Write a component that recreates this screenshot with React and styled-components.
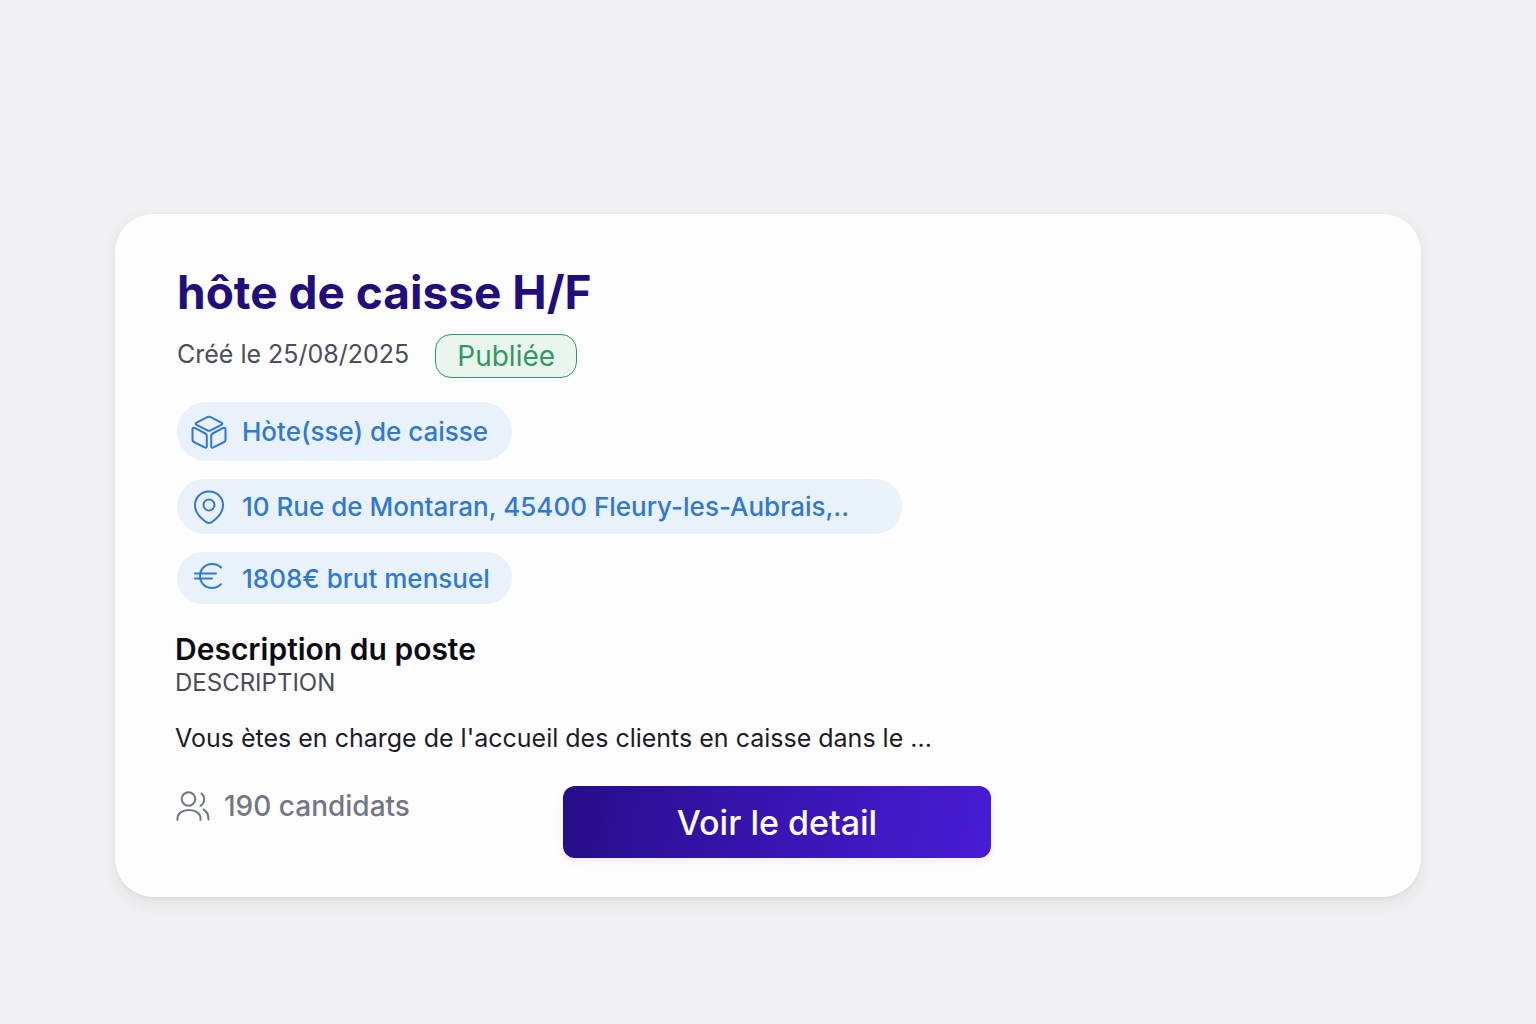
import styled, { createGlobalStyle } from "styled-components";

const App = () => {
  return (
    <>
      <GlobalStyle />
      <Page>
        <Card>
          <Title>hôte de caisse H/F</Title>
          <Meta>
            <CreatedAt>Créé le 25/08/2025</CreatedAt>
            <Status>Publiée</Status>
          </Meta>
          <Tags>
            <Tag $height={59}>
              <BoxIcon />
              Hòte(sse) de caisse
            </Tag>
            <Tag $height={55} $wide>
              <PinIcon />
              <TagText>10 Rue de Montaran, 45400 Fleury-les-Aubrais,..</TagText>
            </Tag>
            <Tag $height={52}>
              <EuroIcon />
              1808€ brut mensuel
            </Tag>
          </Tags>
          <SectionTitle>Description du poste</SectionTitle>
          <Label>DESCRIPTION</Label>
          <Description>
            Vous ètes en charge de l'accueil des clients en caisse dans le ...
          </Description>
          <Footer>
            <Candidates>
              <UsersIcon />
              190 candidats
            </Candidates>
            <DetailButton type="button">Voir le detail</DetailButton>
          </Footer>
        </Card>
      </Page>
    </>
  );
};

export default App;

const BoxIcon = () => (
  <Icon viewBox="0 0 36 36" aria-hidden="true">
    <path d="M16.4 3.2 5.6 8.600c-1.200.6-1.200 1.600 0 2.200l10.800 5.600c1.100.6 2.100.6 3.200 0l10.800-5.600c1.200-.6 1.200-1.600 0-2.200L19.600 3.200c-1.100-.5-2.100-.5-3.200 0Z" />
    <path d="M3.700 13.900c-1.300-.6-2.200-.1-2.200 1.200v10.600c0 1.100.4 1.800 1.400 2.300l10.700 5.400c1.300.6 2.200.1 2.200-1.200V21.800c0-1.100-.4-1.800-1.400-2.300Z" />
    <path d="M32.300 13.900c1.300-.6 2.200-.1 2.200 1.200v10.600c0 1.100-.4 1.800-1.400 2.300l-10.700 5.400c-1.300.6-2.200.1-2.200-1.200V21.800c0-1.100.4-1.800 1.400-2.300Z" />
  </Icon>
);

const PinIcon = () => (
  <Icon viewBox="0 0 36 36" aria-hidden="true">
    <path d="M18 2.500c-8.200 0-14 6-14 13.500 0 6.800 5.400 13.100 11.300 17.200 1.900 1.200 3.500 1.200 5.400 0C26.600 29.100 32 22.800 32 16c0-7.500-5.800-13.500-14-13.500Z" />
    <circle cx="18" cy="16" r="5.500" />
  </Icon>
);

const EuroIcon = () => (
  <Icon viewBox="0 0 36 36" aria-hidden="true">
    <path d="M30 7.500C27.800 5 24.700 4 21 4 14 4 9 9.300 9 16s5 12 12 12c3.700 0 6.800-1.300 9-3.800" />
    <path d="M4 13.500h21M4 18.500h17" />
  </Icon>
);

const UsersIcon = () => (
  <Icon viewBox="0 0 36 36" aria-hidden="true">
    <circle cx="13.500" cy="11" r="6.800" />
    <path d="M2.500 32v-1.500c0-5 4.500-8.500 11.500-8.500s11.500 3.500 11.500 8.500V32" />
    <path d="M26.500 5.500c3.800 3.300 3.800 9.300-1 12.300M28.500 21.500c3.200 1.600 5 5.300 5 10" />
  </Icon>
);

const GlobalStyle = createGlobalStyle`
  * {
    box-sizing: border-box;
  }

  body {
    margin: 0;
    background-color: #f1f1f3;
    font-family: Inter, "Open Sans", sans-serif;
  }
`;

const Page = styled.main`
  min-height: 100vh;
  padding: 214px 115px 120px;
`;

const Card = styled.article`
  padding: 52px 60px 39px;
  border-radius: 38px;
  background-color: #fefdfe;
  box-shadow: 0 6px 16px rgba(30, 35, 70, 0.08), 0 1px 3px rgba(30, 35, 70, 0.06);
`;

const Title = styled.h1`
  margin: 0;
  padding-left: 2px;
  color: #210e7a;
  font-size: 46px;
  font-weight: 700;
  line-height: 52px;
`;

const Meta = styled.div`
  display: flex;
  flex-wrap: wrap;
  gap: 26px;
  margin-top: 16px;
  padding-left: 2px;
`;

const CreatedAt = styled.span`
  color: #4b4d5a;
  font-size: 25px;
  font-weight: 400;
  line-height: 40px;
`;

const Status = styled.span`
  padding: 0 21px;
  border: 1px solid #2f9c60;
  border-radius: 16px;
  background-color: #eaf5ee;
  color: #2f9a60;
  font-size: 28px;
  font-weight: 400;
  line-height: 42px;
`;

const Tags = styled.div`
  display: flex;
  flex-direction: column;
  align-items: flex-start;
  gap: 18px;
  margin-top: 24px;
  padding-left: 2px;
`;

const Tag = styled.div`
  display: flex;
  align-items: center;
  gap: 15px;
  width: ${({ $wide }) => ($wide ? "725px" : "auto")};
  min-width: 335px;
  max-width: 100%;
  height: ${({ $height }) => $height}px;
  padding: 0 14px;
  border-radius: 30px;
  background-color: #e9f1fb;
  color: #3079d0;
  font-size: 26px;
  font-weight: 500;
  white-space: nowrap;
`;

const TagText = styled.span`
  overflow: hidden;
  text-overflow: ellipsis;
`;

const Icon = styled.svg`
  flex: none;
  width: 36px;
  height: 36px;
  fill: none;
  stroke: currentColor;
  stroke-width: 2;
  stroke-linecap: round;
  stroke-linejoin: round;
`;

const SectionTitle = styled.h2`
  margin: 28px 0 0;
  color: #0c0d14;
  font-size: 30px;
  font-weight: 600;
  line-height: 34px;
`;

const Label = styled.p`
  margin: 0;
  color: #4a4b54;
  font-size: 24px;
  font-weight: 400;
  line-height: 34px;
`;

const Description = styled.p`
  margin: 20px 0 0;
  color: #1b1c26;
  font-size: 25px;
  font-weight: 400;
  line-height: 36px;
`;

const Footer = styled.footer`
  display: grid;
  grid-template-columns: 388px minmax(0, 428px);
  margin-top: 30px;
`;

const Candidates = styled.div`
  display: flex;
  align-items: center;
  gap: 13px;
  height: 40px;
  color: #737785;
  font-size: 28px;
  font-weight: 500;
`;

const DetailButton = styled.button`
  height: 72px;
  border: 0;
  border-radius: 12px;
  background: linear-gradient(100deg, #250e88 0%, #3714ae 45%, #481cd4 100%);
  box-shadow: 0 3px 8px rgba(40, 20, 130, 0.08);
  color: #fff;
  font-family: inherit;
  font-size: 34px;
  font-weight: 500;
  cursor: pointer;
`;
